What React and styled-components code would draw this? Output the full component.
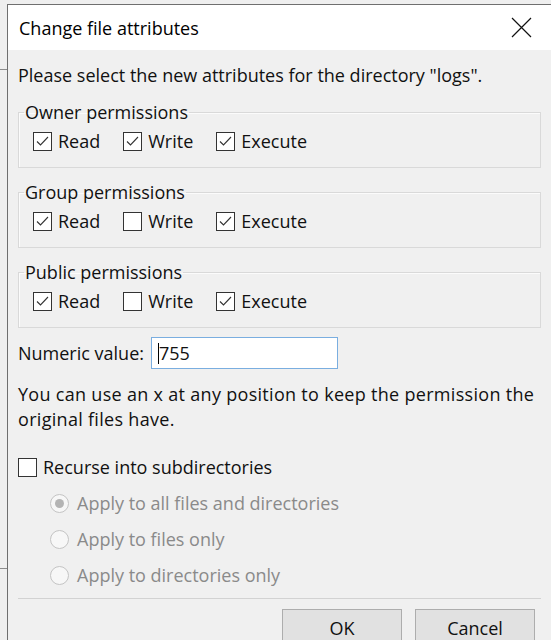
import React from 'react';
import styled, { createGlobalStyle } from 'styled-components';

const GlobalStyle = createGlobalStyle`
  html, body {
    margin: 0;
    padding: 0;
    background: #efefef;
  }
  * {
    box-sizing: border-box;
  }
`;

// Window chrome
const Page = styled.div`
  display: flex;
  width: 551px;
  height: 640px;
  overflow: hidden;
  padding-top: 4px;
  font-family: "Open Sans", "Noto Sans", sans-serif;
  font-size: 18px;
  color: #111;
`;

const BehindStrip = styled.div`
  width: 7px;
  flex-shrink: 0;
  display: flex;
  flex-direction: column;
  margin-top: -4px;
`;

const BehindPane = styled.div`
  height: ${(p) => p.h}px;
  border-bottom: 1px solid #8c8c8c;
`;

const Dialog = styled.div`
  flex: 1;
  display: flex;
  flex-direction: column;
  border-top: 1px solid #6f6f6f;
  border-left: 1px solid #6f6f6f;
  background: #f0f0f0;
`;

const TitleBar = styled.div`
  height: 45px;
  flex-shrink: 0;
  display: flex;
  align-items: center;
  justify-content: space-between;
  padding: 0 19px 0 11px;
  background: #fff;
`;

const Title = styled.span`
  color: #000;
`;

const CloseButton = styled.button`
  border: none;
  background: none;
  padding: 0;
  width: 22px;
  height: 22px;
  display: flex;
  align-items: center;
  justify-content: center;
`;

const Body = styled.div`
  display: flex;
  flex-direction: column;
  padding: 13px 10px 0 10px;
`;

const Text = styled.p`
  margin: ${(p) => p.mt || 0}px 0 0 0;
  line-height: ${(p) => p.lh || 24}px;
  letter-spacing: ${(p) => p.ls || 0}px;
`;

// Group boxes
const GroupBox = styled.fieldset`
  margin: ${(p) => (p.first ? 13 : 12)}px 0 0 0;
  padding: 5px 13px 14px 5px;
  border: 1px solid #d9d9d9;
  box-shadow: inset 1px 1px 0 #fbfbfb;
  min-width: 0;
`;

const Legend = styled.legend`
  padding: 0 1px;
  line-height: 24px;
`;

const CheckRow = styled.div`
  display: flex;
  align-items: center;
  gap: 23px;
  padding-left: ${(p) => p.indent || 0}px;
  height: 24px;
`;

const CheckItem = styled.label`
  display: flex;
  align-items: center;
  gap: 6px;
`;

const Box = styled.span`
  width: 19px;
  height: 19px;
  flex-shrink: 0;
  border: 1px solid #333;
  background: #fff;
  display: flex;
  align-items: center;
  justify-content: center;
`;

const Checkbox = ({ checked, label }) => (
  <CheckItem>
    <Box>
      {checked && (
        <svg width="17" height="17" viewBox="0 0 17 17">
          <path d="M3 8.5 L6.5 12 L14 4" fill="none" stroke="#333" strokeWidth="1.1" />
        </svg>
      )}
    </Box>
    {label}
  </CheckItem>
);

const PermissionGroup = ({ title, read, write, execute, first }) => (
  <GroupBox first={first}>
    <Legend>{title}</Legend>
    <CheckRow indent={9}>
      <Checkbox checked={read} label="Read" />
      <Checkbox checked={write} label="Write" />
      <Checkbox checked={execute} label="Execute" />
    </CheckRow>
  </GroupBox>
);

// Numeric value
const NumericRow = styled.div`
  margin-top: 9px;
  display: flex;
  align-items: center;
  gap: 7px;
`;

const TextField = styled.div`
  width: 187px;
  height: 32px;
  border: 1px solid #7aaee0;
  background: #fff;
  display: flex;
  align-items: center;
  padding-left: 6px;
`;

const Caret = styled.span`
  width: 1px;
  height: 21px;
  background: #000;
`;

// Recurse options
const RecurseRow = styled.div`
  margin-top: 23px;
  height: 24px;
  display: flex;
  align-items: center;
`;

const RadioList = styled.div`
  margin-top: 12px;
  display: flex;
  flex-direction: column;
  gap: 12px;
  padding-left: 32px;
`;

const RadioItem = styled.label`
  height: 24px;
  display: flex;
  align-items: center;
  gap: 8px;
  color: #8a8a8a;
`;

const RadioCircle = styled.span`
  width: 19px;
  height: 19px;
  border-radius: 50%;
  border: 1px solid #c4c4c4;
  background: #f7f7f7;
  display: flex;
  align-items: center;
  justify-content: center;

  &::after {
    content: '';
    display: ${(p) => (p.selected ? 'block' : 'none')};
    width: 9px;
    height: 9px;
    border-radius: 50%;
    background: #b4b4b4;
  }
`;

const Separator = styled.div`
  margin-top: 11px;
  height: 1px;
  background: #d2d2d2;
`;

const ButtonRow = styled.div`
  margin-top: 10px;
  display: flex;
  justify-content: flex-end;
  gap: 13px;
  padding-right: 6px;
`;

const Button = styled.button`
  width: 120px;
  height: 37px;
  border: 1px solid #adadad;
  background: #e1e1e1;
  font-family: inherit;
  font-size: 18px;
  color: #111;
  padding: 0;
`;

export default function App() {
  return (
    <>
      <GlobalStyle />
      <Page>
        <BehindStrip>
          <BehindPane h={70} />
          <BehindPane h={499} />
        </BehindStrip>
        <Dialog>
          <TitleBar>
            <Title>Change file attributes</Title>
            <CloseButton aria-label="Close">
              <svg width="21" height="21" viewBox="0 0 21 21">
                <path d="M1 1 L20 20 M20 1 L1 20" stroke="#111" strokeWidth="1.2" />
              </svg>
            </CloseButton>
          </TitleBar>
          <Body>
            <Text>Please select the new attributes for the directory "logs".</Text>
            <PermissionGroup title="Owner permissions" first read write execute />
            <PermissionGroup title="Group permissions" read execute />
            <PermissionGroup title="Public permissions" read execute />
            <NumericRow>
              Numeric value:
              <TextField>
                <Caret />
                755
              </TextField>
            </NumericRow>
            <Text mt={13} lh={25} ls={0.3}>
              You can use an x at any position to keep the permission the original files have.
            </Text>
            <RecurseRow>
              <Checkbox label="Recurse into subdirectories" />
            </RecurseRow>
            <RadioList>
              <RadioItem>
                <RadioCircle selected />
                Apply to all files and directories
              </RadioItem>
              <RadioItem>
                <RadioCircle />
                Apply to files only
              </RadioItem>
              <RadioItem>
                <RadioCircle />
                Apply to directories only
              </RadioItem>
            </RadioList>
            <Separator />
            <ButtonRow>
              <Button>OK</Button>
              <Button>Cancel</Button>
            </ButtonRow>
          </Body>
        </Dialog>
      </Page>
    </>
  );
}
